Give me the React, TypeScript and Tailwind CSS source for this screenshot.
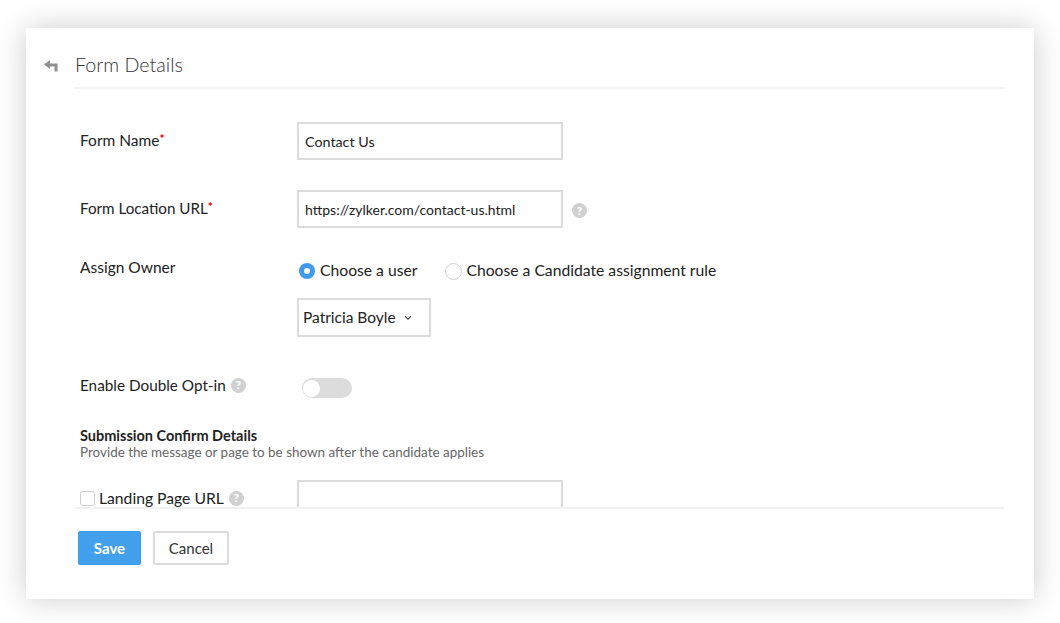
import React from 'react';

const HelpIcon = ({ className = '' }: { className?: string }) => (
  <span
    className={`inline-flex h-[15px] w-[15px] shrink-0 items-center justify-center rounded-full bg-[#d0d0d0] text-[12px] leading-none font-black text-white ${className}`}
  >
    ?
  </span>
);

const Required = () => <span className="relative -top-[3px] text-[12px] leading-none font-black text-[#e8000b]">*</span>;

const App: React.FC = () => {
  return (
    <div className="h-[623px] w-[1060px] overflow-hidden bg-white pt-[28px] pl-[26px] font-['Lato','Noto_Sans',sans-serif] text-[15.5px] text-[#222]">
      <div className="flex h-[571px] w-[1008px] flex-col bg-white shadow-[0_0_28px_rgba(0,0,0,0.2)]">
        {/* Header */}
        <div className="relative mr-[30px] ml-[49px] h-[61px] shrink-0 border-b-2 border-[#f1f1f1] pt-[24px]">
          <svg
            className="absolute top-[32px] -left-[31px]"
            width="14"
            height="12"
            viewBox="0 0 14 12"
            fill="#8f8f8f"
          >
            <path d="M6 0 L0 4.6 L6 9 V6.4 H10.5 V11.5 H13.5 V3.4 H6 Z" />
          </svg>
          <h1 className="text-[19.7px] leading-[26px] font-light text-[#333]">Form Details</h1>
        </div>

        {/* Form */}
        <div className="mr-[30px] ml-[49px] h-[420px] shrink-0 overflow-hidden border-b-2 border-[#f1f1f1] pl-[5px]">
          <div className="mt-[33px] flex items-start">
            <label className="w-[217px] pt-[7px] leading-[22px]">
              Form Name<Required />
            </label>
            <input
              readOnly
              value="Contact Us"
              className="h-[38px] w-[266px] border-2 border-[#dcdcdc] px-[6px] text-[14.3px] text-[#222] outline-none"
            />
          </div>

          <div className="mt-[30px] flex items-start">
            <label className="w-[217px] pt-[7px] text-[15.2px] leading-[22px]">
              Form Location URL<Required />
            </label>
            <input
              readOnly
              value="https://zylker.com/contact-us.html"
              className="h-[38px] w-[266px] border-2 border-[#dcdcdc] px-[6px] text-[14px] text-[#222] outline-none"
            />
            <HelpIcon className="mt-[13px] ml-[9px]" />
          </div>

          <div className="mt-[28px] flex items-start">
            <label className="w-[217px] leading-[22px]">Assign Owner</label>
            <div className="pt-[4px]">
              <div className="flex h-[22px] items-center pl-[2px] text-[15.7px]">
                <span className="flex h-[16px] w-[16px] items-center justify-center rounded-full bg-[#3f9bf0]">
                  <span className="h-[6px] w-[6px] rounded-full bg-white" />
                </span>
                <span className="ml-[5px]">Choose a user</span>
                <span className="ml-[28px] h-[17px] w-[17px] rounded-full border border-[#cfcfcf] bg-white" />
                <span className="ml-[4px]">Choose a Candidate assignment rule</span>
              </div>
              <div className="mt-[16px] flex h-[39px] w-[134px] items-center border-2 border-[#dcdcdc] pl-[4px]">
                <span>Patricia Boyle</span>
                <svg className="ml-[8px]" width="8" height="6" viewBox="0 0 8 6" fill="none" stroke="#444" strokeWidth="1.2">
                  <path d="M1 1.2 L4 4.2 L7 1.2" />
                </svg>
              </div>
            </div>
          </div>

          <div className="mt-[41px] flex h-[20px] items-start">
            <label className="-mt-[3px] flex h-[20px] w-[222px] items-center text-[15.3px]">
              <span>Enable Double Opt-in</span>
              <HelpIcon className="ml-[5px]" />
            </label>
            <span className="flex h-[20px] w-[50px] items-center rounded-full bg-[#dcdcdc] pl-[1px]">
              <span className="h-[17px] w-[17px] rounded-full bg-white" />
            </span>
          </div>

          <h2 className="mt-[29px] text-[14.5px] leading-[18px] font-bold text-[#222]">Submission Confirm Details</h2>
          <p className="-mt-px text-[13.45px] leading-[16px] text-[#666]">
            Provide the message or page to be shown after the candidate applies
          </p>

          <div className="mt-[20px] flex items-start">
            <label className="flex w-[217px] items-center pt-[8px] text-[15.7px] leading-[20px]">
              <span className="h-[15px] w-[15px] rounded-[3px] border border-[#cfcfcf] bg-white" />
              <span className="ml-[4px]">Landing Page URL</span>
              <HelpIcon className="ml-[5px]" />
            </label>
            <div className="h-[38px] w-[266px] shrink-0 border-2 border-[#dcdcdc]" />
          </div>
        </div>

        {/* Footer */}
        <div className="mt-[22px] ml-[52px] flex gap-[12px]">
          <button className="h-[34px] w-[63px] rounded-[2px] border border-[#3b9cf0] bg-[#42a0ec] text-[15px] font-bold text-white">
            Save
          </button>
          <button className="h-[34px] w-[76px] rounded-[2px] border-2 border-[#dcdcdc] bg-white text-[15px] text-[#333]">
            Cancel
          </button>
        </div>
      </div>
    </div>
  );
};

export default App;
